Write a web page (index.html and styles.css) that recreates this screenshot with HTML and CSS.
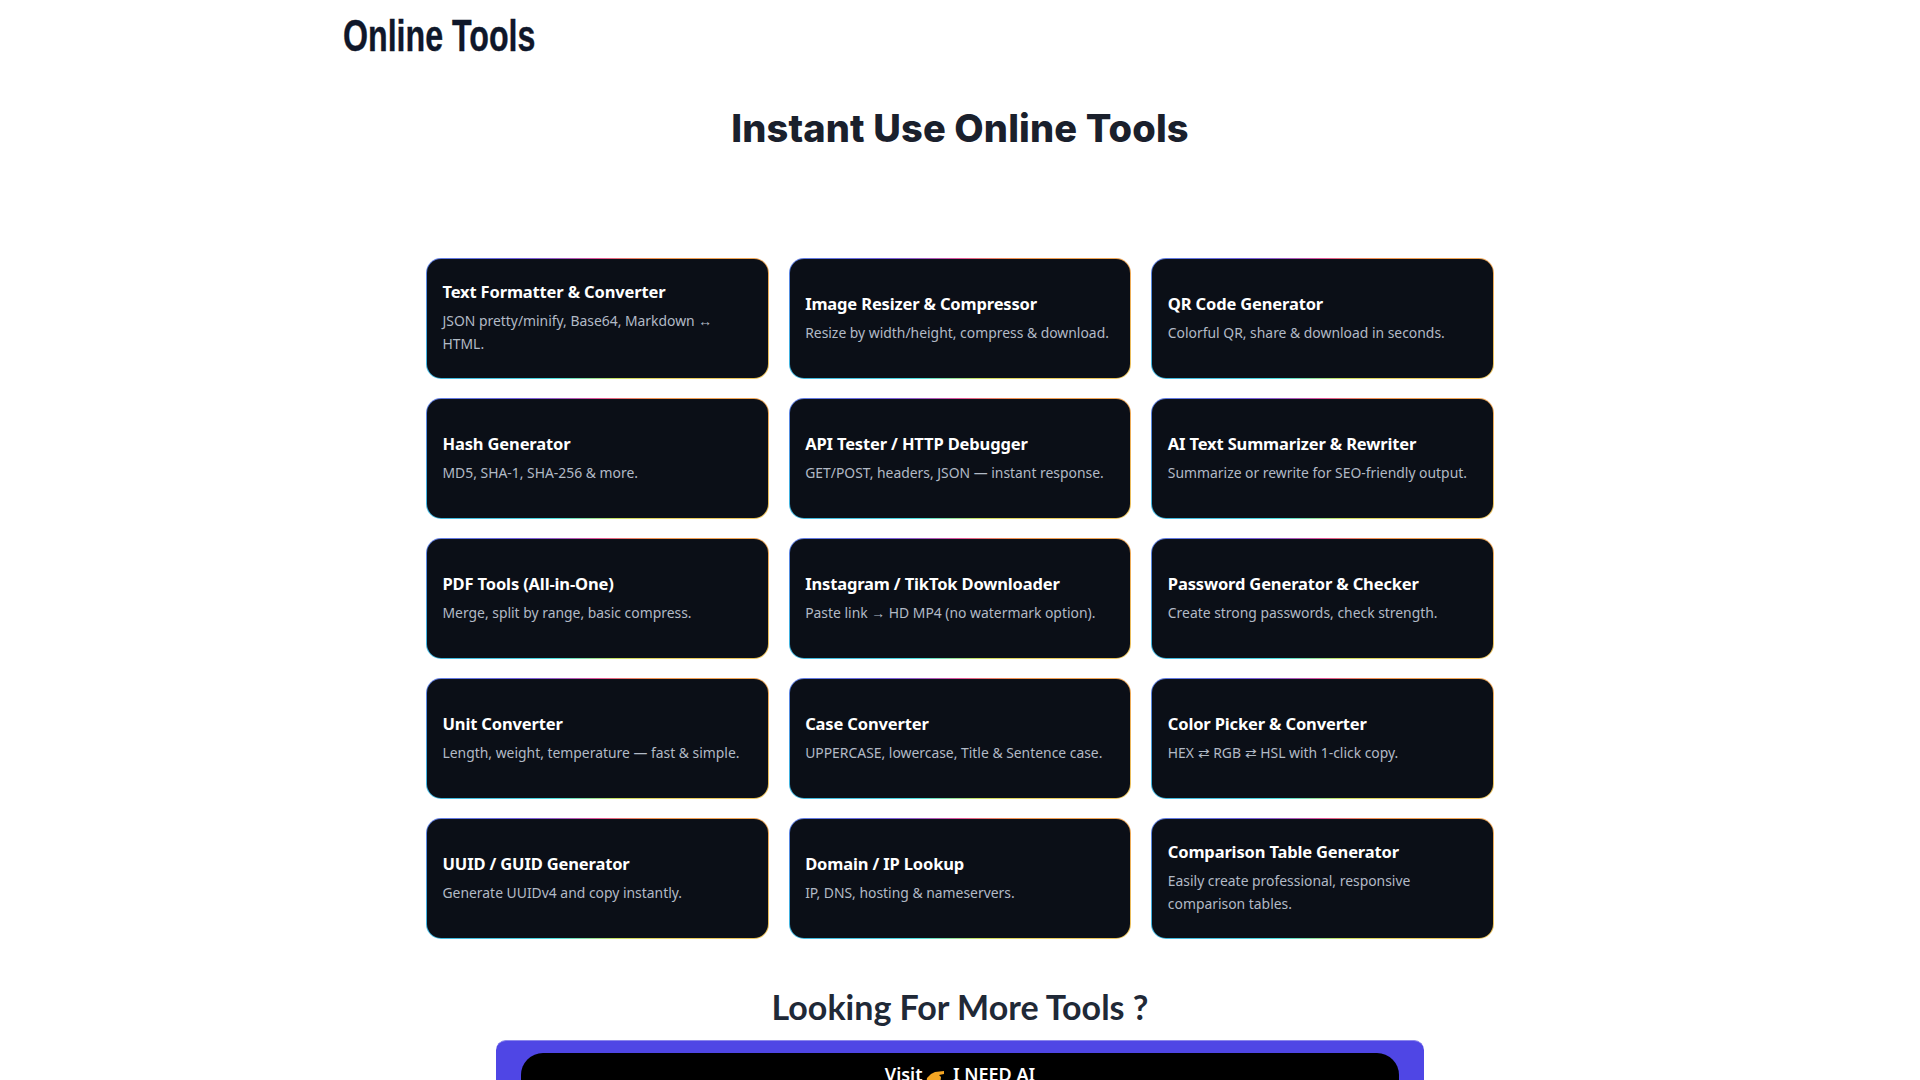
FILE: index.html
```html
<!DOCTYPE html>
<html lang="en">
<head>
<meta charset="utf-8">
<title>Online Tools</title>
<link rel="stylesheet" href="styles.css">
</head>
<body>
<header class="site-header"><a class="logo">Online Tools</a></header>
<main class="main">
  <h1 class="page-title">Instant Use Online Tools</h1>
  <section class="tool-grid">
    <a class="card"><h3 class="card-title">Text Formatter &amp; Converter</h3><p class="card-desc">JSON pretty/minify, Base64, Markdown ↔ HTML.</p></a>
    <a class="card"><h3 class="card-title">Image Resizer &amp; Compressor</h3><p class="card-desc">Resize by width/height, compress &amp; download.</p></a>
    <a class="card"><h3 class="card-title">QR Code Generator</h3><p class="card-desc">Colorful QR, share &amp; download in seconds.</p></a>
    <a class="card"><h3 class="card-title">Hash Generator</h3><p class="card-desc">MD5, SHA-1, SHA-256 &amp; more.</p></a>
    <a class="card"><h3 class="card-title">API Tester / HTTP Debugger</h3><p class="card-desc">GET/POST, headers, JSON — instant response.</p></a>
    <a class="card"><h3 class="card-title">AI Text Summarizer &amp; Rewriter</h3><p class="card-desc">Summarize or rewrite for SEO-friendly output.</p></a>
    <a class="card"><h3 class="card-title">PDF Tools (All-in-One)</h3><p class="card-desc">Merge, split by range, basic compress.</p></a>
    <a class="card"><h3 class="card-title">Instagram / TikTok Downloader</h3><p class="card-desc">Paste link → HD MP4 (no watermark option).</p></a>
    <a class="card"><h3 class="card-title">Password Generator &amp; Checker</h3><p class="card-desc">Create strong passwords, check strength.</p></a>
    <a class="card"><h3 class="card-title">Unit Converter</h3><p class="card-desc">Length, weight, temperature — fast &amp; simple.</p></a>
    <a class="card"><h3 class="card-title">Case Converter</h3><p class="card-desc">UPPERCASE, lowercase, Title &amp; Sentence case.</p></a>
    <a class="card"><h3 class="card-title">Color Picker &amp; Converter</h3><p class="card-desc">HEX ⇄ RGB ⇄ HSL with 1-click copy.</p></a>
    <a class="card"><h3 class="card-title">UUID / GUID Generator</h3><p class="card-desc">Generate UUIDv4 and copy instantly.</p></a>
    <a class="card"><h3 class="card-title">Domain / IP Lookup</h3><p class="card-desc">IP, DNS, hosting &amp; nameservers.</p></a>
    <a class="card"><h3 class="card-title">Comparison Table Generator</h3><p class="card-desc">Easily create professional, responsive comparison tables.</p></a>
  </section>
  <h2 class="more-title">Looking For More Tools ?</h2>
  <div class="cta">
    <a class="cta-button">Visit <svg class="cta-icon" viewBox="0 0 20 20" aria-hidden="true"><path d="M1 20 L2 13 L6 9 L10 7 L19 6 L19 9 L14 10 L16 12 L15 20 Z" fill="#f5a623"/></svg> I NEED AI</a>
  </div>
</main>
</body>
</html>
```
FILE: styles.css
```css
* { box-sizing: border-box; }
html, body { margin: 0; padding: 0; background: #fff; }
body { font-family: "Noto Sans", "Open Sans", sans-serif; color: #1f2937; }
.site-header { width: 1234px; margin: 0 auto; height: 72px; display: flex; align-items: center; }
.logo {
  display: inline-block;
  font-family: "Liberation Sans", sans-serif;
  font-weight: 700;
  font-size: 45px;
  line-height: 72px;
  color: #0f172a;
  transform: scaleX(0.715);
  transform-origin: left center;
  -webkit-text-stroke: 0.4px #0f172a;
}
.main { width: 1068px; margin: 0 auto; display: flex; flex-direction: column; align-items: center; }
.page-title {
  margin: 31px 0 0;
  font-family: "Inter", sans-serif;
  font-weight: 800;
  font-size: 38px;
  line-height: 50px;
  letter-spacing: 0.15px;
  color: #1a202c;
}
.tool-grid {
  margin-top: 105px;
  width: 100%;
  display: grid;
  grid-template-columns: repeat(3, 1fr);
  grid-auto-rows: 121px;
  column-gap: 20px;
  row-gap: 19px;
}
.card {
  display: flex;
  flex-direction: column;
  justify-content: center;
  padding: 0 15px 2px 15.5px;
  border: 1px solid transparent;
  border-radius: 15px;
  background:
    linear-gradient(#0b0f17, #0b0f17) padding-box,
    conic-gradient(from 0deg, #e0509a, #f09050 12%, #e8d060 35%, #c8e060 45%, #50e0e0 60%, #40b0e0 72%, #7060e0 85%, #e0509a) border-box;
}
.card-title { margin: 0; font-size: 16.5px; line-height: 24px; font-weight: 700; color: #fff; letter-spacing: -0.15px; }
.card-desc { margin: 5px 0 0; font-size: 13.9px; line-height: 23px; color: #b2bac6; }
.more-title {
  margin: 45px 0 0;
  font-family: "Lato", sans-serif;
  font-weight: 700;
  font-size: 34px;
  line-height: 46px;
  color: #1f2937;
}
.cta {
  margin-top: 10px;
  width: 928px;
  padding: 12px 25px;
  background: #4f46e5;
  border-radius: 10px;
  border-top: 1px solid #8b86ec;
}
.cta-button {
  display: block;
  height: 60px;
  padding-top: 9px;
  background: #000;
  border-radius: 22px;
  color: #fff;
  text-align: center;
  font-size: 18px;
  font-weight: 600;
}
.cta-icon { width: 20px; height: 20px; vertical-align: -4px; margin: 0 3px 0 -2px; }
```
